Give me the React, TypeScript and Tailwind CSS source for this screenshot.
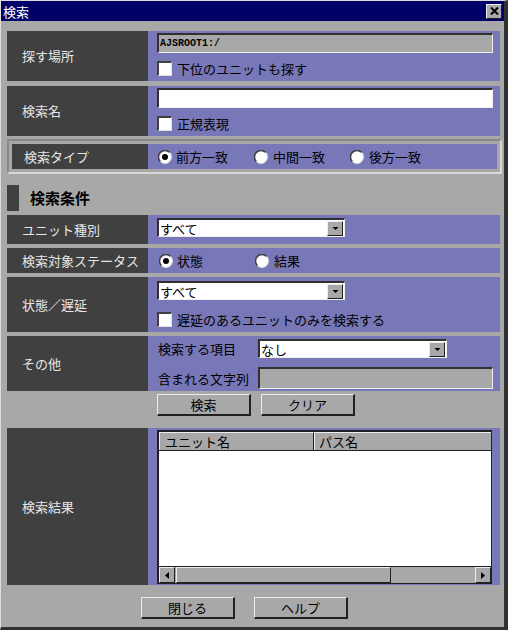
import React from 'react'

const jp = "font-['Noto_Sans_CJK_JP','Noto_Sans_CJK_SC',sans-serif]"

function Radio({ checked = false }: { checked?: boolean }) {
  return (
    <svg width="14" height="14" viewBox="0 0 14 14" className="shrink-0">
      <circle cx="7" cy="7" r="6.5" fill="#ffffff" />
      <path d="M2.4 11.6 A6.5 6.5 0 0 1 11.6 2.4" fill="none" stroke="#404040" strokeWidth="1.5" />
      <path d="M11.6 2.4 A6.5 6.5 0 0 1 2.4 11.6" fill="none" stroke="#d8d8d8" strokeWidth="1" />
      {checked && <circle cx="7" cy="7" r="3" fill="#000000" />}
    </svg>
  )
}

function Checkbox() {
  return (
    <div className="w-[15px] h-[15px] shrink-0 bg-white border-t-2 border-l-2 border-t-[#404040] border-l-[#404040] border-b border-r border-b-[#e0e0e0] border-r-[#e0e0e0]" />
  )
}

function Sunken({ className = '', children }: { className?: string; children?: React.ReactNode }) {
  return (
    <div className={`border-t-2 border-l-2 border-t-[#303030] border-l-[#303030] border-b border-r border-b-[#f0f0f0] border-r-[#f0f0f0] ${className}`}>
      {children}
    </div>
  )
}

function Select({ value, className = '' }: { value: string; className?: string }) {
  return (
    <Sunken className={`bg-white flex items-center ${className}`}>
      <span className="flex-1 pl-[1px] text-[13px] leading-none text-black">{value}</span>
      <div className="w-[16px] h-[15px] mr-[1px] bg-[#a8a8a8] border-t border-l border-t-[#ececec] border-l-[#ececec] border-b border-r border-b-[#202020] border-r-[#202020] flex items-center justify-center">
        <svg width="7" height="5" viewBox="0 0 7 5">
          <path d="M0.5 1 L6.5 1 L3.5 4 Z" fill="#000000" />
        </svg>
      </div>
    </Sunken>
  )
}

function Button({ label }: { label: string }) {
  return (
    <button className="w-[94px] h-[22px] bg-[#a8a8a8] border-t border-l border-t-[#ececec] border-l-[#ececec] border-b-2 border-r-2 border-b-[#202020] border-r-[#202020] text-[13px] leading-none text-black flex items-center justify-center">
      {label}
    </button>
  )
}

function Row({ label, h, children }: { label: string; h: string; children: React.ReactNode }) {
  return (
    <div className={`flex w-[493px] ${h}`}>
      <div className="w-[141px] shrink-0 bg-[#404040] flex items-center pl-[15px] text-[13px] text-[#e6e6e6]">{label}</div>
      <div className="flex-1 bg-[#7878b8] pl-[9px]">{children}</div>
    </div>
  )
}

function RaisedBox({ className = '', children }: { className?: string; children?: React.ReactNode }) {
  return (
    <div className={`bg-[#a8a8a8] border-t border-l border-t-[#ececec] border-l-[#ececec] border-b border-r border-b-[#202020] border-r-[#202020] ${className}`}>
      {children}
    </div>
  )
}

export default function App() {
  return (
    <div className={`w-[508px] h-[630px] bg-[#a8a8a8] border-t border-l border-t-[#dcdcdc] border-l-[#dcdcdc] border-r-4 border-b-3 border-r-[#303030] border-b-[#303030] flex flex-col ${jp}`}>
      {/* title bar */}
      <div className="h-[20px] bg-[#000066] flex items-center justify-between pl-[2px] pr-[2px]">
        <span className="text-white text-[13px] leading-none">検索</span>
        <div className="w-[16px] h-[15px] bg-[#a8a8a8] border-t border-l border-t-[#ececec] border-l-[#ececec] border-b border-r border-b-[#202020] border-r-[#202020] flex items-center justify-center">
          <svg width="9" height="8" viewBox="0 0 9 8">
            <path d="M1 0.5 L8 7.5 M8 0.5 L1 7.5" stroke="#000000" strokeWidth="2" />
          </svg>
        </div>
      </div>

      <div className="pl-[6px] flex flex-col">
        <div className="mt-[10px]">
          <Row label="探す場所" h="h-[50px]">
            <div className="pt-[2px] flex flex-col">
              <Sunken className="w-[336px] h-[20px] bg-[#a8a8a8] flex items-center pl-[1px]">
                <span className="font-['Liberation_Mono',monospace] text-[10px] font-bold text-black leading-none">AJSROOT1:/</span>
              </Sunken>
              <div className="mt-[8px] flex items-center gap-[5px]">
                <Checkbox />
                <span className="text-[13px] text-black leading-none">下位のユニットも探す</span>
              </div>
            </div>
          </Row>
        </div>

        <div className="mt-[5px]">
          <Row label="検索名" h="h-[50px]">
            <div className="pt-[2px] flex flex-col">
              <Sunken className="w-[336px] h-[20px] bg-white" />
              <div className="mt-[8px] flex items-center gap-[5px]">
                <Checkbox />
                <span className="text-[13px] text-black leading-none">正規表現</span>
              </div>
            </div>
          </Row>
        </div>

        {/* search type frame */}
        <div className="mt-[3px] w-[495px] h-[35px] border-2 border-t-[#888888] border-l-[#888888] border-b-[#d8d8d8] border-r-[#d8d8d8] p-[3px] flex">
          <div className="w-[136px] bg-[#404040] flex items-center pl-[12px] text-[13px] text-[#e6e6e6]">検索タイプ</div>
          <div className="flex-1 bg-[#7878b8] flex items-center pl-[10px] text-[13px] text-black">
            <div className="w-[96px] flex items-center gap-[4px]"><Radio checked /><span>前方一致</span></div>
            <div className="w-[96px] flex items-center gap-[5px]"><Radio /><span>中間一致</span></div>
            <div className="flex items-center gap-[5px]"><Radio /><span>後方一致</span></div>
          </div>
        </div>

        {/* section header */}
        <div className="mt-[11px] h-[26px] flex items-center">
          <div className="w-[12px] h-[26px] bg-[#404040]" />
          <span className="ml-[11px] text-[15px] font-bold text-black">検索条件</span>
        </div>

        <div className="mt-[4px]">
          <Row label="ユニット種別" h="h-[29px]">
            <div className="pt-[3px]">
              <Select value="すべて" className="w-[188px] h-[19px]" />
            </div>
          </Row>
        </div>

        <div className="mt-[4px]">
          <Row label="検索対象ステータス" h="h-[25px]">
            <div className="h-full flex items-center pl-[2px] text-[13px] text-black">
              <div className="w-[96px] flex items-center gap-[4px]"><Radio checked /><span>状態</span></div>
              <div className="flex items-center gap-[5px]"><Radio /><span>結果</span></div>
            </div>
          </Row>
        </div>

        <div className="mt-[4px]">
          <Row label="状態／遅延" h="h-[55px]">
            <div className="pt-[4px] flex flex-col">
              <Select value="すべて" className="w-[188px] h-[19px]" />
              <div className="mt-[12px] flex items-center gap-[5px]">
                <Checkbox />
                <span className="text-[13px] text-black leading-none">遅延のあるユニットのみを検索する</span>
              </div>
            </div>
          </Row>
        </div>

        <div className="mt-[4px]">
          <Row label="その他" h="h-[55px]">
            <div className="pt-[3px] flex flex-col text-[13px] text-black">
              <div className="flex items-center">
                <span className="w-[101px] pl-[1px] leading-none">検索する項目</span>
                <Select value="なし" className="w-[189px] h-[19px]" />
              </div>
              <div className="mt-[9px] flex items-center">
                <span className="w-[101px] pl-[1px] leading-none">含まれる文字列</span>
                <Sunken className="w-[235px] h-[22px] bg-[#a8a8a8]" />
              </div>
            </div>
          </Row>
        </div>

        <div className="mt-[3px] flex gap-[10px] pl-[150px]">
          <Button label="検索" />
          <Button label="クリア" />
        </div>

        <div className="mt-[12px]">
          <Row label="検索結果" h="h-[157px]">
            <div className="pt-[2px]">
              <div className="w-[335px] h-[154px] bg-white border border-[#202020] border-t-2 border-l-2 flex flex-col">
                <div className="h-[19px] flex bg-[#a8a8a8] border-b border-b-[#202020] text-[13px] text-black">
                  <div className="w-[155px] border-t border-l border-t-[#ececec] border-l-[#ececec] border-r border-r-[#202020] pl-[5px] flex items-center leading-none">ユニット名</div>
                  <div className="flex-1 border-t border-l border-t-[#ececec] border-l-[#ececec] pl-[4px] flex items-center leading-none">パス名</div>
                </div>
                <div className="flex-1 bg-white" />
                <div className="h-[17px] flex bg-[#a8a8a8] border-t border-t-[#202020]">
                  <RaisedBox className="w-[16px] h-full flex items-center justify-center">
                    <svg width="4" height="7" viewBox="0 0 4 7"><path d="M4 0 L0 3.5 L4 7 Z" fill="#000000" /></svg>
                  </RaisedBox>
                  <RaisedBox className="ml-[1px] w-[215px] h-full" />
                  <div className="flex-1" />
                  <RaisedBox className="w-[16px] h-full flex items-center justify-center">
                    <svg width="4" height="7" viewBox="0 0 4 7"><path d="M0 0 L4 3.5 L0 7 Z" fill="#000000" /></svg>
                  </RaisedBox>
                </div>
              </div>
            </div>
          </Row>
        </div>

        <div className="mt-[12px] flex gap-[19px] pl-[134px]">
          <Button label="閉じる" />
          <Button label="ヘルプ" />
        </div>
      </div>
    </div>
  )
}
